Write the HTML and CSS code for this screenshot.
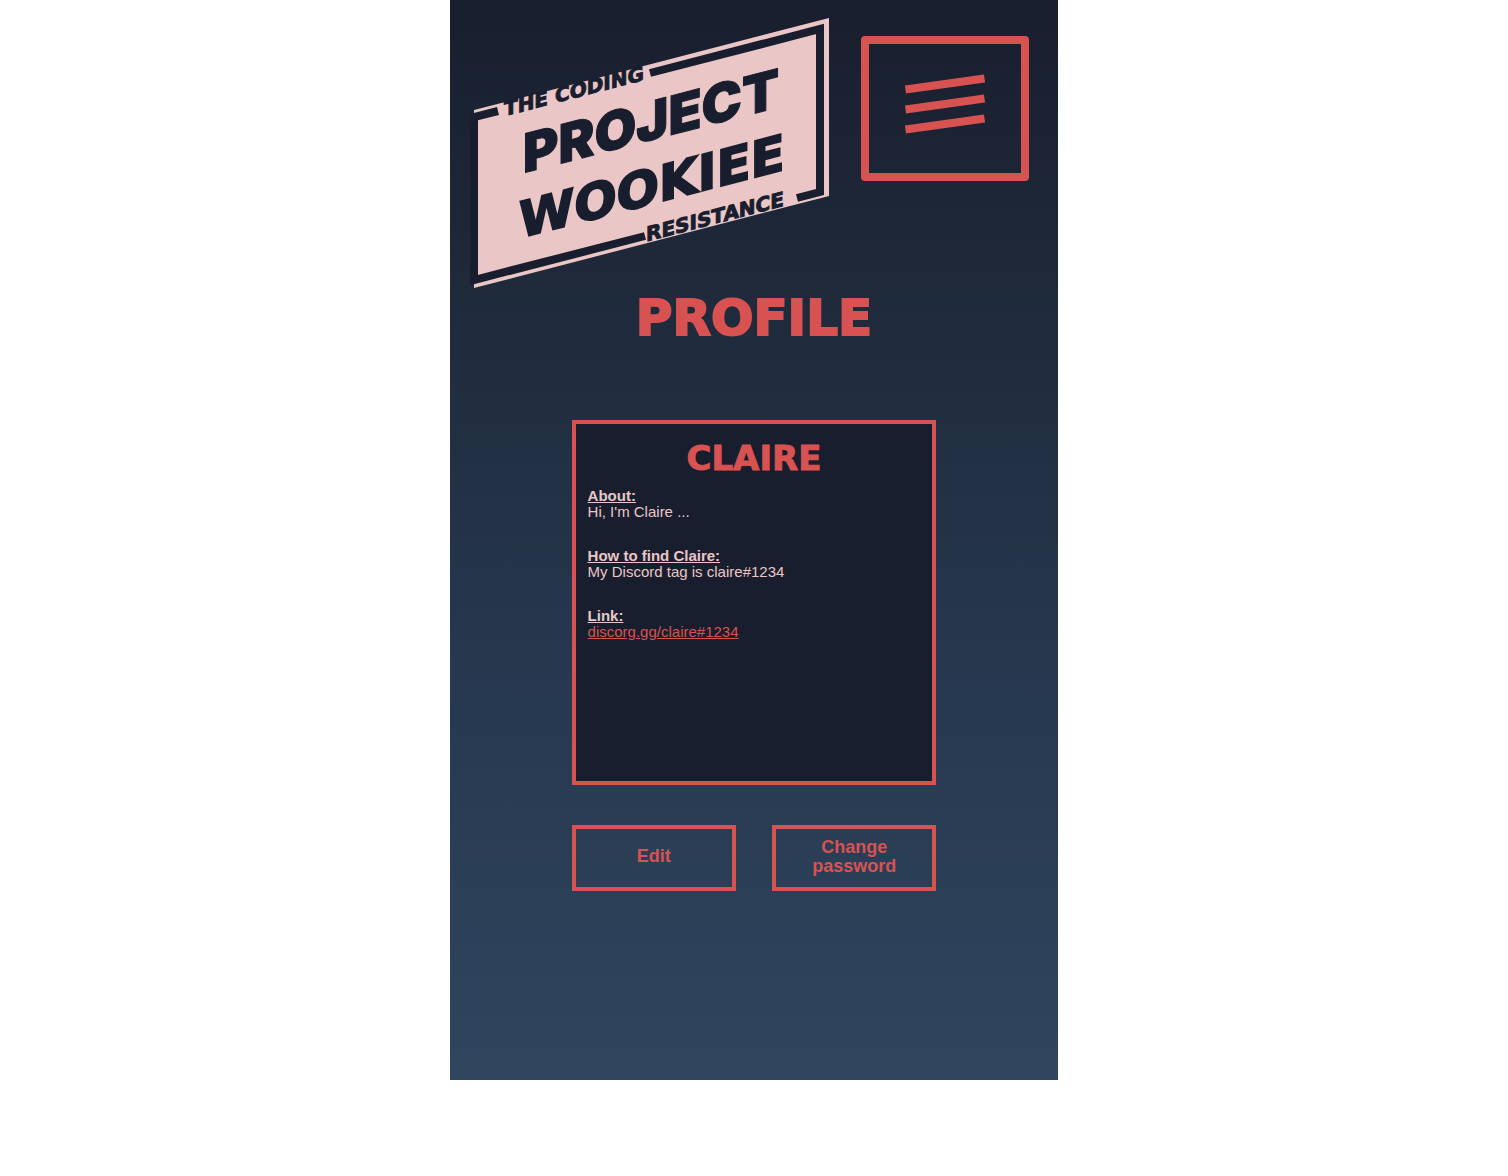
FILE: index.html
```html
<!DOCTYPE html>
<html lang="en">
<head>
<meta charset="utf-8">
<meta name="viewport" content="width=device-width, initial-scale=1">
<title>Profile</title>
<link rel="stylesheet" href="styles.css">
</head>
<body>
<div class="screen">
  <header class="header">
    <svg class="logo" viewBox="0 0 359 270" role="img" aria-label="Project Wookiee, the coding resistance">
      <polygon class="logo-plate" points="4,92 359,0 359,178 4,270"/>
      <path class="logo-frame" d="M28 93 L4 99 V262 L175 218"/>
      <path class="logo-frame" d="M180 55 L350 11 V174 L327 180"/>
      <g class="logo-text" transform="skewY(-14.5)">
        <text class="logo-small" x="34" y="107">THE CODING</text>
        <text class="logo-large" x="53" y="169">PROJECT</text>
        <text class="logo-wide" x="49" y="233">WOOKIEE</text>
        <text class="logo-small" x="176" y="269">RESISTANCE</text>
      </g>
    </svg>
    <button class="menu" type="button" aria-label="Menu">
      <svg class="menu-icon" viewBox="0 0 80 60" aria-hidden="true">
        <path d="M0.500 15.500 L79.500 4.500 M0.500 35.500 L79.500 24.500 M0.500 55.500 L79.500 44.500"/>
      </svg>
    </button>
  </header>
  <main class="main">
    <h1 class="page-title">PROFILE</h1>
    <section class="card">
      <h2 class="card-title">CLAIRE</h2>
      <div class="field"><h3 class="label">About:</h3><p class="value">Hi, I'm Claire ...</p></div>
      <div class="field"><h3 class="label">How to find Claire:</h3><p class="value">My Discord tag is claire#1234</p></div>
      <div class="field"><h3 class="label">Link:</h3><p class="value"><a class="link" href="#">discorg.gg/claire#1234</a></p></div>
    </section>
    <div class="actions">
      <button class="action" type="button">Edit</button>
      <button class="action" type="button">Change password</button>
    </div>
  </main>
</div>
</body>
</html>
```
FILE: styles.css
```css
* { box-sizing: border-box; }

body {
  margin: 0;
  background: #fff;
  font-family: Arial, "Liberation Sans", sans-serif;
}

h1, h2, h3, p { margin: 0; }

.screen {
  width: 100%;
  max-width: 608px;
  min-height: 1080px;
  margin: 0 auto;
  background: linear-gradient(#191e2e, #212e40 37%, #26374e 60%, #2f465e);
}

.header {
  display: flex;
  align-items: flex-start;
  justify-content: space-between;
  gap: 32px;
  padding: 18px 29px 0 20px;
}

.logo { flex: 0 1 359px; min-width: 0; }
.logo-plate { fill: #ebc6c6; }
.logo-frame { fill: none; stroke: #191e2e; stroke-width: 8; stroke-linejoin: miter; }
.logo-text { fill: #191e2e; stroke: #191e2e; stroke-width: 1px; font-family: "DejaVu Sans", sans-serif; font-weight: 900; }
.logo-small { font-size: 20px; }
.logo-wide { font-size: 50px; stroke-width: 2px; }
.logo-large { font-family: Inter, sans-serif; font-size: 54px; }

.menu {
  display: flex;
  flex: 0 0 168px;
  justify-content: center;
  height: 145px;
  margin-top: 18px;
  padding: 28px 0 0;
  border: 8px solid #d95252;
  border-radius: 4px;
  background: none;
  cursor: pointer;
}

.menu-icon { width: 80px; height: 64px; fill: none; stroke: #d95252; stroke-width: 8; overflow: visible; }

.main {
  width: 60%;
  min-width: 280px;
  margin: 0 auto;
}

.page-title, .card-title {
  color: #d95252;
  font-family: "DejaVu Sans", sans-serif;
  font-weight: 900;
  text-align: center;
}

.page-title { font-size: 50px; line-height: 60px; -webkit-text-stroke: 2px #d95252; }

.card {
  aspect-ratio: 1;
  margin-top: 72px;
  padding: 12px;
  border: 4px solid #d95252;
  background: #191e2e;
  color: #ebc6c6;
}

.card-title { margin-bottom: 8px; font-size: 34px; line-height: 44px; -webkit-text-stroke: 1px #d95252; }
.field { margin-bottom: 28px; }
.label, .value { font-size: 15px; line-height: 16px; }
.label { text-decoration: underline; }
.link { color: #d95252; }

.actions {
  display: flex;
  gap: 36px;
  margin-top: 40px;
}

.action {
  flex: 1;
  height: 66px;
  padding: 0 24px 2px;
  border: 4px solid #d95252;
  background: none;
  color: #d95252;
  font: bold 18px/19px Arial, "Liberation Sans", sans-serif;
  cursor: pointer;
}
```
